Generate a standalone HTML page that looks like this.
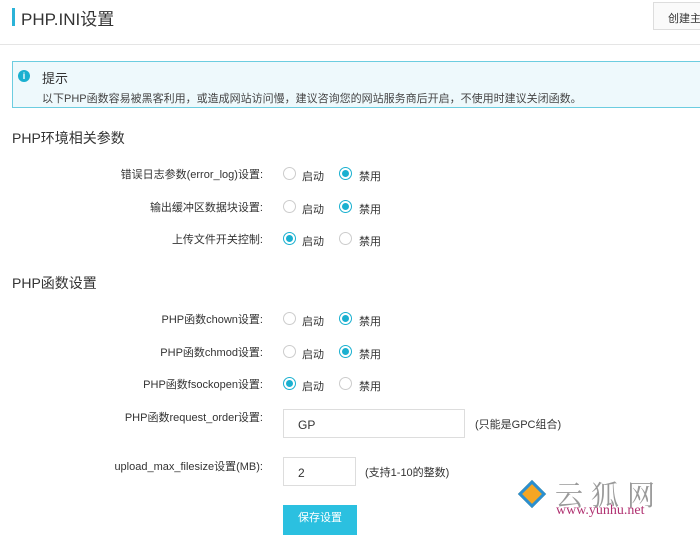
<!DOCTYPE html><html><head><meta charset="utf-8"><style>
body{margin:0;width:700px;height:522px;overflow:hidden;background:#fff;font-family:"Liberation Sans","Noto Sans CJK SC",sans-serif;color:#333;position:relative}
.a{position:absolute;white-space:nowrap}
.lbl{position:absolute;right:437px;font-size:11px;color:#333;white-space:nowrap}
.r{position:absolute;width:13px;height:13px;border:1px solid #ccc;border-radius:50%;box-sizing:border-box;background:#fff;margin-top:-1px}
.r.on{border-color:#1ab0d0}
.r.on:after{content:"";position:absolute;left:2px;top:2px;width:7px;height:7px;border-radius:50%;background:#1ab0d0}
.t{position:absolute;font-size:11px;color:#333}
.inp{position:absolute;border:1px solid #ddd;box-sizing:border-box;font-size:12px;padding:8px 0 0 14px}
</style></head><body>
<div class="a" style="left:12px;top:8px;width:3px;height:18px;background:#2bb3d8"></div>
<div class="a" style="left:21px;top:5px;font-size:17px;color:#333">PHP.INI设置</div>
<div class="a" style="left:653px;top:2px;width:60px;height:28px;border:1px solid #ddd;box-sizing:border-box;font-size:11px;padding:7px 0 0 14px;background:#fafafa">创建主</div>
<div class="a" style="left:0;top:44px;width:700px;height:1px;background:#e5e5e5"></div>
<div class="a" style="left:12px;top:61px;width:700px;height:47px;border:1px solid #6ccde0;background:#eef9fc;box-sizing:border-box"></div>
<div class="a" style="left:18px;top:70px;width:12px;height:12px;border-radius:50%;background:#1ab0d0;color:#fff;font-size:9px;text-align:center;line-height:12px;font-weight:bold">i</div>
<div class="a" style="left:42px;top:68px;font-size:13px">提示</div>
<div class="a" style="left:42px;top:90px;font-size:11px;color:#444">以下PHP函数容易被黑客利用，或造成网站访问慢，建议咨询您的网站服务商后开启，不使用时建议关闭函数。</div>
<div class="a" style="left:12px;top:128px;font-size:14px">PHP环境相关参数</div>
<div class="a" style="left:12px;top:273px;font-size:14px">PHP函数设置</div>

<div class="lbl" style="top:166px">错误日志参数(error_log)设置:</div>
<div class="r" style="left:283px;top:168px"></div><div class="t" style="left:302px;top:168px">启动</div>
<div class="r on" style="left:339px;top:168px"></div><div class="t" style="left:359px;top:168px">禁用</div>

<div class="lbl" style="top:199px">输出缓冲区数据块设置:</div>
<div class="r" style="left:283px;top:201px"></div><div class="t" style="left:302px;top:201px">启动</div>
<div class="r on" style="left:339px;top:201px"></div><div class="t" style="left:359px;top:201px">禁用</div>

<div class="lbl" style="top:231px">上传文件开关控制:</div>
<div class="r on" style="left:283px;top:233px"></div><div class="t" style="left:302px;top:233px">启动</div>
<div class="r" style="left:339px;top:233px"></div><div class="t" style="left:359px;top:233px">禁用</div>

<div class="lbl" style="top:311px">PHP函数chown设置:</div>
<div class="r" style="left:283px;top:313px"></div><div class="t" style="left:302px;top:313px">启动</div>
<div class="r on" style="left:339px;top:313px"></div><div class="t" style="left:359px;top:313px">禁用</div>

<div class="lbl" style="top:344px">PHP函数chmod设置:</div>
<div class="r" style="left:283px;top:346px"></div><div class="t" style="left:302px;top:346px">启动</div>
<div class="r on" style="left:339px;top:346px"></div><div class="t" style="left:359px;top:346px">禁用</div>

<div class="lbl" style="top:376px">PHP函数fsockopen设置:</div>
<div class="r on" style="left:283px;top:378px"></div><div class="t" style="left:302px;top:378px">启动</div>
<div class="r" style="left:339px;top:378px"></div><div class="t" style="left:359px;top:378px">禁用</div>

<div class="lbl" style="top:409px">PHP函数request_order设置:</div>
<div class="inp" style="left:283px;top:409px;width:182px;height:29px">GP</div>
<div class="t" style="left:475px;top:416px">(只能是GPC组合)</div>

<div class="lbl" style="top:458px">upload_max_filesize设置(MB):</div>
<div class="inp" style="left:283px;top:457px;width:73px;height:29px">2</div>
<div class="t" style="left:365px;top:464px">(支持1-10的整数)</div>

<div class="a" style="left:283px;top:505px;width:74px;height:30px;background:#2bc0e0;color:#fff;font-size:11px;text-align:center;line-height:26px">保存设置</div>

<div class="a" style="left:522px;top:484px;width:20px;height:20px;transform:rotate(45deg);border:3px solid #2a8fd0;background:#f5a623;box-sizing:border-box"></div>
<div class="a" style="left:555px;top:474px;font-size:28px;color:#999;letter-spacing:8px;font-family:'Noto Serif CJK SC',serif">云狐网</div>
<div class="a" style="left:556px;top:503px;font-size:14px;color:#b03070;font-family:'Liberation Serif',serif">www.yunhu.net</div>
</body></html>
